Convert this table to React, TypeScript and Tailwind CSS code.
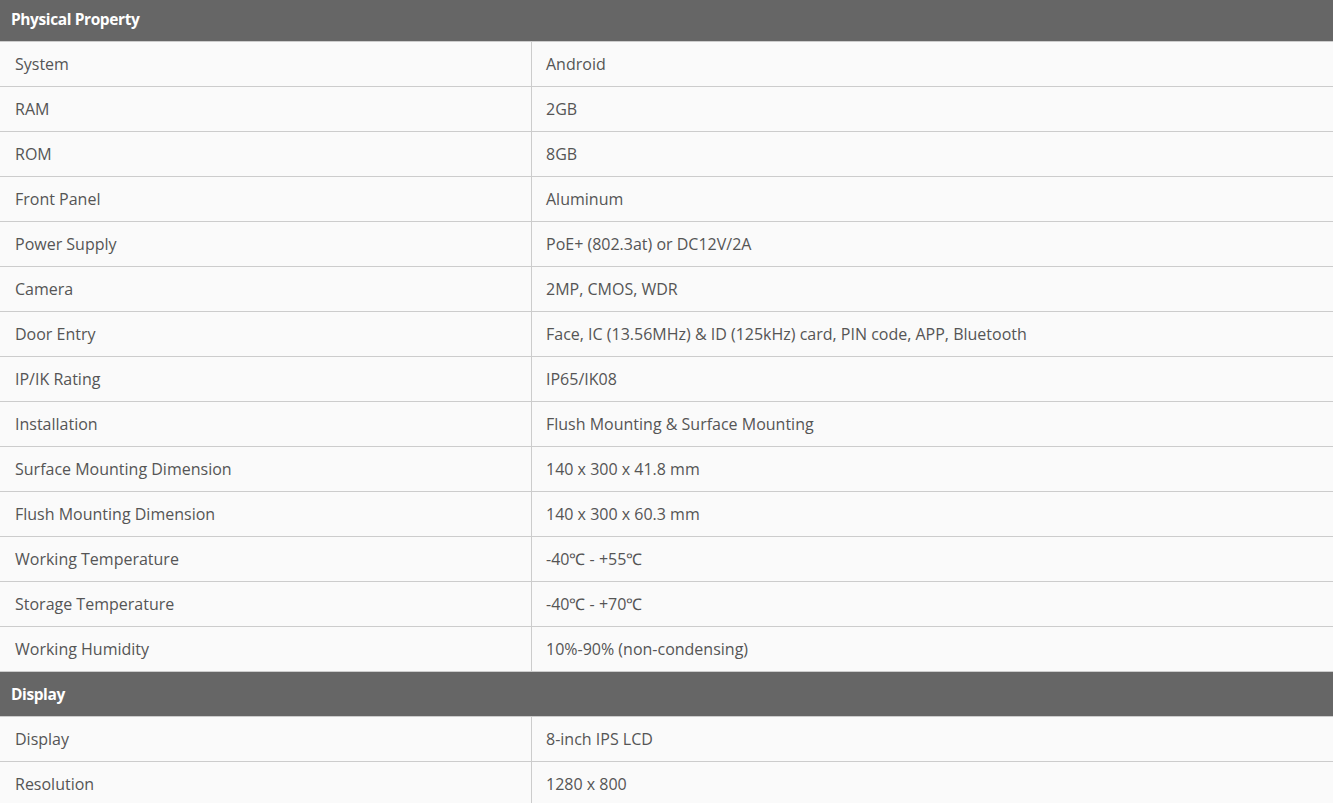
const font = { fontFamily: '"Open Sans", "Liberation Sans", sans-serif' };

type Section = { title: string; rows: [string, string][] };

const sections: Section[] = [
  {
    title: "Physical Property",
    rows: [
      ["System", "Android"],
      ["RAM", "2GB"],
      ["ROM", "8GB"],
      ["Front Panel", "Aluminum"],
      ["Power Supply", "PoE+ (802.3at) or DC12V/2A"],
      ["Camera", "2MP, CMOS, WDR"],
      ["Door Entry", "Face, IC (13.56MHz) & ID (125kHz) card, PIN code, APP, Bluetooth"],
      ["IP/IK Rating", "IP65/IK08"],
      ["Installation", "Flush Mounting & Surface Mounting"],
      ["Surface Mounting Dimension", "140 x 300 x 41.8 mm"],
      ["Flush Mounting Dimension", "140 x 300 x 60.3 mm"],
      ["Working Temperature", "-40℃ - +55℃"],
      ["Storage Temperature", "-40℃ - +70℃"],
      ["Working Humidity", "10%-90% (non-condensing)"],
    ],
  },
  {
    title: "Display",
    rows: [
      ["Display", "8-inch IPS LCD"],
      ["Resolution", "1280 x 800"],
    ],
  },
];

export default function App() {
  return (
    <div className="min-h-screen w-full bg-[#fafafa]" style={font}>
      {sections.map((section, si) => (
        <div key={section.title}>
          <div
            className={`flex items-center bg-[#666666] border-b border-[#cccccc] px-[11px] text-[15.5px] font-bold text-white ${
              si === 0 ? "h-[42px] pb-[2px]" : "h-[45px] pt-[1px]"
            }`}
          >
            <span className="tracking-[-0.4px]">{section.title}</span>
          </div>
          {section.rows.map(([label, value]) => (
            <div
              key={label}
              className="flex h-[45px] border-b border-[#cccccc] text-[16px] text-[#555555]"
            >
              <div className="flex w-[532px] shrink-0 items-center border-r border-[#cccccc] pl-[15px]">
                {label}
              </div>
              <div className="flex flex-1 items-center pl-[14px]">{value}</div>
            </div>
          ))}
        </div>
      ))}
    </div>
  );
}
